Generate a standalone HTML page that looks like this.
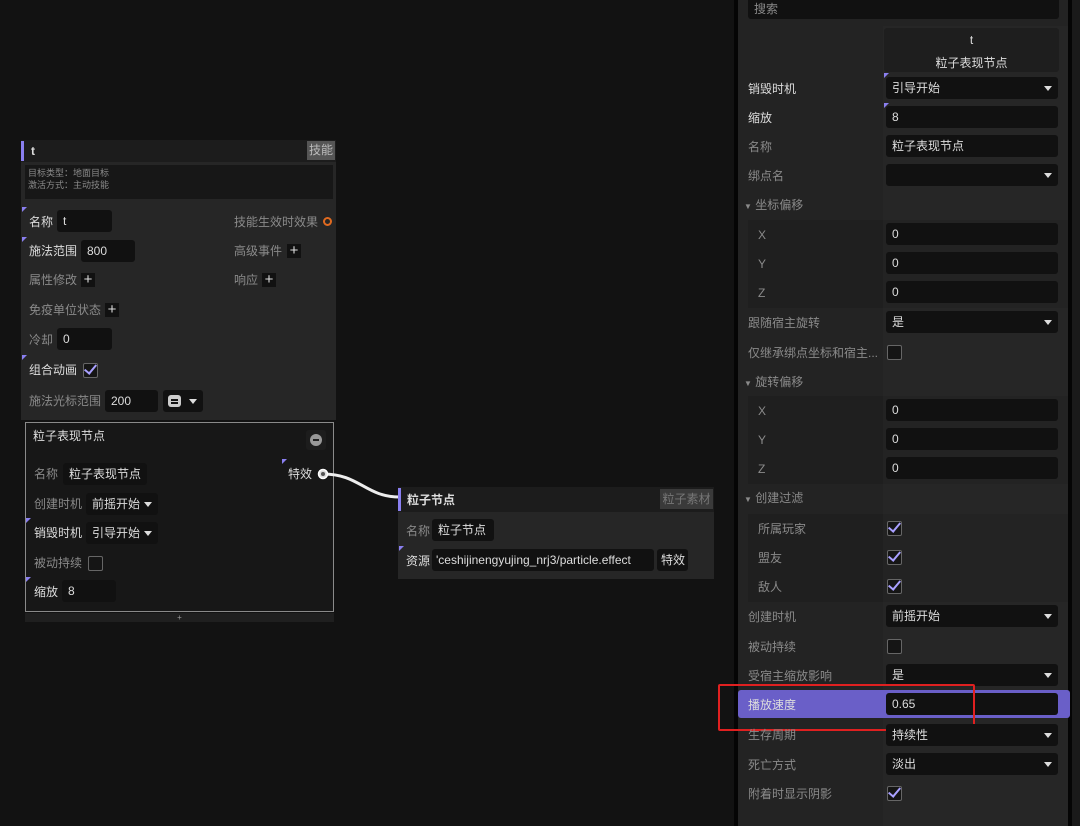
<!DOCTYPE html>
<html><head><meta charset="utf-8"><style>
*{margin:0;padding:0;box-sizing:border-box}
body{width:1080px;height:826px;background:#121212;position:relative;overflow:hidden;font-family:"Liberation Sans","Noto Sans CJK SC",sans-serif;font-size:12px;color:#ddd}
.a{position:absolute}
.t{position:absolute;line-height:16px;white-space:nowrap}
.g{color:#8a8a8a}
.in{position:absolute;background:#111;border-radius:3px;height:22px;line-height:22px;padding-left:6px;color:#ddd;white-space:nowrap;overflow:hidden}
.dd:after{content:"";position:absolute;right:6px;top:9px;border-left:4px solid transparent;border-right:4px solid transparent;border-top:5px solid #ddd}
.cb{position:absolute;width:15px;height:15px;border:1.5px solid #666;background:#151515;border-radius:2px}
.ck:after{content:"";position:absolute;left:3px;top:-2px;width:5px;height:10px;border-right:2px solid #a9a0ff;border-bottom:2px solid #a9a0ff;transform:rotate(40deg)}
.tri{position:absolute;width:0;height:0;border-top:5px solid #8a7ff0;border-right:5px solid transparent}
.plus{position:absolute;width:14px;height:14px;background:#111;color:#ddd;font-size:15px;line-height:13px;text-align:center}
</style></head><body>

<!-- skill node -->
<div class="a" style="left:21px;top:140px;width:315px;height:22px;background:#1c1c1c"></div>
<div class="a" style="left:21px;top:141px;width:3px;height:20px;background:#8a7ff0"></div>
<div class="t" style="left:31px;top:143px;font-weight:bold">t</div>
<div class="a" style="left:307px;top:141px;width:28px;height:19px;background:#555;color:#bbb;text-align:center;line-height:19px">技能</div>
<div class="a" style="left:21px;top:162px;width:315px;height:258px;background:#262626"></div>
<div class="a" style="left:25px;top:165px;width:308px;height:34px;background:#171717"></div>
<div class="t g" style="left:28px;top:167px;font-size:9px;line-height:12px">目标类型：地面目标<br>激活方式：主动技能</div>
<div class="tri" style="left:22px;top:207px"></div>
<div class="t" style="left:29px;top:214px">名称</div><div class="in" style="left:57px;top:210px;width:55px">t</div>
<div class="t g" style="left:234px;top:214px">技能生效时效果</div>
<div class="a" style="left:323px;top:217px;width:9px;height:9px;border:2px solid #e06a20;border-radius:50%"></div>
<div class="tri" style="left:22px;top:237px"></div>
<div class="t" style="left:29px;top:243px">施法范围</div><div class="in" style="left:81px;top:240px;width:54px">800</div>
<div class="t g" style="left:234px;top:243px">高级事件</div><div class="plus" style="left:287px;top:244px">+</div>
<div class="t g" style="left:29px;top:272px">属性修改</div><div class="plus" style="left:81px;top:273px">+</div>
<div class="t g" style="left:234px;top:272px">响应</div><div class="plus" style="left:262px;top:273px">+</div>
<div class="t g" style="left:29px;top:302px">免疫单位状态</div><div class="plus" style="left:105px;top:303px">+</div>
<div class="t g" style="left:29px;top:332px">冷却</div><div class="in" style="left:57px;top:328px;width:55px">0</div>
<div class="tri" style="left:22px;top:355px"></div>
<div class="t" style="left:29px;top:362px">组合动画</div><div class="cb ck" style="left:83px;top:363px"></div>
<div class="t g" style="left:29px;top:393px">施法光标范围</div><div class="in" style="left:105px;top:390px;width:53px">200</div>
<div class="a" style="left:163px;top:390px;width:40px;height:22px;background:#111;border-radius:3px"></div>
<div class="a" style="left:168px;top:395px;width:13px;height:12px;background:#ccc;border-radius:3px"></div>
<div class="a" style="left:171px;top:399px;width:7px;height:1.5px;background:#111"></div><div class="a" style="left:171px;top:402px;width:7px;height:1.5px;background:#111"></div>
<div class="a" style="left:189px;top:399px;border-left:4px solid transparent;border-right:4px solid transparent;border-top:5px solid #ddd"></div>

<!-- particle presentation node -->
<div class="a" style="left:25px;top:422px;width:309px;height:190px;background:#171717;border:1px solid #8a8a8a"></div>
<div class="t" style="left:33px;top:428px">粒子表现节点</div>
<div class="a" style="left:306px;top:430px;width:20px;height:20px;background:#1d1d1d;border-radius:3px"></div>
<div class="a" style="left:310px;top:434px;width:12px;height:12px;background:#999;border-radius:50%"></div>
<div class="a" style="left:313px;top:439px;width:6px;height:2px;background:#222"></div>
<div class="t g" style="left:34px;top:466px">名称</div><div class="in" style="left:63px;top:463px;width:84px">粒子表现节点</div>
<div class="tri" style="left:282px;top:459px"></div>
<div class="t" style="left:288px;top:466px">特效</div>
<div class="t g" style="left:34px;top:496px">创建时机</div><div class="in dd" style="left:86px;top:493px;width:72px;padding-right:18px">前摇开始</div>
<div class="tri" style="left:26px;top:518px"></div>
<div class="t" style="left:34px;top:525px">销毁时机</div><div class="in dd" style="left:86px;top:522px;width:72px">引导开始</div>
<div class="t g" style="left:34px;top:555px">被动持续</div><div class="cb" style="left:88px;top:556px"></div>
<div class="tri" style="left:26px;top:577px"></div>
<div class="t" style="left:34px;top:584px">缩放</div><div class="in" style="left:62px;top:580px;width:54px">8</div>
<div class="a" style="left:25px;top:613px;width:309px;height:9px;background:#1f1f1f;color:#999;font-size:8px;line-height:9px;text-align:center">+</div>

<!-- wire -->
<svg class="a" style="left:0;top:0" width="1080" height="826"><path d="M323 474 C360 474 365 497 400 497" stroke="#eee" stroke-width="3" fill="none"/><circle cx="323" cy="474" r="4.5" fill="#ddd" stroke="#fff" stroke-width="1.5"/><circle cx="323" cy="474" r="2" fill="#555"/></svg>

<!-- particle node -->
<div class="a" style="left:398px;top:487px;width:316px;height:25px;background:#1c1c1c"></div>
<div class="a" style="left:398px;top:488px;width:3px;height:23px;background:#8a7ff0"></div>
<div class="t" style="left:407px;top:492px;font-weight:bold">粒子节点</div>
<div class="a" style="left:660px;top:489px;width:53px;height:20px;background:#3a3a3a;color:#777;text-align:center;line-height:20px">粒子素材</div>
<div class="a" style="left:398px;top:512px;width:316px;height:67px;background:#262626"></div>
<div class="t g" style="left:406px;top:523px">名称</div><div class="in" style="left:432px;top:519px;width:62px">粒子节点</div>
<div class="tri" style="left:399px;top:546px"></div>
<div class="t" style="left:406px;top:553px">资源</div><div class="in" style="left:432px;top:549px;width:222px;padding-left:4px">'ceshijinengyujing_nrj3/particle.effect</div>
<div class="in" style="left:657px;top:549px;width:31px;padding-left:4px">特效</div>

<!-- right panel -->
<div class="a" style="left:734px;top:0;width:338px;height:826px;background:#050505"></div>
<div class="a" style="left:1072px;top:0;width:8px;height:826px;background:#1a1a1a"></div>
<div class="a" style="left:738px;top:0;width:330px;height:826px;background:#232323"></div>
<div class="a" style="left:883px;top:26px;width:185px;height:800px;background:#262626"></div>
<div class="in" style="left:748px;top:-4px;width:311px;height:23px;line-height:26px;color:#8a8a8a">搜索</div>
<div class="a" style="left:884px;top:28px;width:175px;height:44px;background:#1e1e1e;border-radius:3px"></div>
<div class="t" style="left:884px;width:175px;text-align:center;top:32px">t</div>
<div class="t" style="left:884px;width:175px;text-align:center;top:55px">粒子表现节点</div>
<!-- groups bg -->
<div class="a" style="left:748px;top:220px;width:320px;height:88px;background:#1f1f1f"></div>
<div class="a" style="left:748px;top:396px;width:320px;height:88px;background:#1f1f1f"></div>
<div class="a" style="left:748px;top:514px;width:320px;height:88px;background:#1f1f1f"></div>
<div class="a" style="left:883px;top:220px;width:185px;height:88px;background:#232323"></div>
<div class="a" style="left:883px;top:396px;width:185px;height:88px;background:#232323"></div>
<div class="a" style="left:883px;top:514px;width:185px;height:88px;background:#232323"></div>

<div class="tri" style="left:884px;top:73px"></div>
<div class="t" style="left:748px;top:81px">销毁时机</div><div class="in dd" style="left:886px;top:77px;width:172px">引导开始</div>
<div class="tri" style="left:884px;top:103px"></div>
<div class="t" style="left:748px;top:110px">缩放</div><div class="in" style="left:886px;top:106px;width:172px">8</div>
<div class="t g" style="left:748px;top:139px">名称</div><div class="in" style="left:886px;top:135px;width:172px">粒子表现节点</div>
<div class="t g" style="left:748px;top:168px">绑点名</div><div class="in dd" style="left:886px;top:164px;width:172px"></div>
<div class="t g" style="left:744px;top:197px"><span style="font-size:8px">▼</span> 坐标偏移</div>
<div class="t g" style="left:758px;top:227px">X</div><div class="in" style="left:886px;top:223px;width:172px">0</div>
<div class="t g" style="left:758px;top:256px">Y</div><div class="in" style="left:886px;top:252px;width:172px">0</div>
<div class="t g" style="left:758px;top:285px">Z</div><div class="in" style="left:886px;top:281px;width:172px">0</div>
<div class="t g" style="left:748px;top:315px">跟随宿主旋转</div><div class="in dd" style="left:886px;top:311px;width:172px">是</div>
<div class="t g" style="left:748px;top:345px">仅继承绑点坐标和宿主...</div><div class="cb" style="left:887px;top:345px"></div>
<div class="t g" style="left:744px;top:374px"><span style="font-size:8px">▼</span> 旋转偏移</div>
<div class="t g" style="left:758px;top:403px">X</div><div class="in" style="left:886px;top:399px;width:172px">0</div>
<div class="t g" style="left:758px;top:432px">Y</div><div class="in" style="left:886px;top:428px;width:172px">0</div>
<div class="t g" style="left:758px;top:461px">Z</div><div class="in" style="left:886px;top:457px;width:172px">0</div>
<div class="t g" style="left:744px;top:490px"><span style="font-size:8px">▼</span> 创建过滤</div>
<div class="t g" style="left:758px;top:521px">所属玩家</div><div class="cb ck" style="left:887px;top:521px"></div>
<div class="t g" style="left:758px;top:550px">盟友</div><div class="cb ck" style="left:887px;top:550px"></div>
<div class="t g" style="left:758px;top:579px">敌人</div><div class="cb ck" style="left:887px;top:579px"></div>
<div class="t g" style="left:748px;top:609px">创建时机</div><div class="in dd" style="left:886px;top:605px;width:172px">前摇开始</div>
<div class="t g" style="left:748px;top:639px">被动持续</div><div class="cb" style="left:887px;top:639px"></div>
<div class="t g" style="left:748px;top:668px">受宿主缩放影响</div><div class="in dd" style="left:886px;top:664px;width:172px">是</div>
<div class="a" style="left:738px;top:690px;width:332px;height:28px;background:#6a5fc8;border-radius:3px"></div>
<div class="t" style="left:748px;top:697px">播放速度</div><div class="in" style="left:886px;top:693px;width:172px">0.65</div>
<div class="a" style="left:718px;top:684px;width:257px;height:47px;border:2px solid #e02020;border-radius:2px"></div>
<div class="t g" style="left:748px;top:727px">生存周期</div><div class="in dd" style="left:886px;top:724px;width:172px">持续性</div>
<div class="t g" style="left:748px;top:757px">死亡方式</div><div class="in dd" style="left:886px;top:753px;width:172px">淡出</div>
<div class="t g" style="left:748px;top:786px">附着时显示阴影</div><div class="cb ck" style="left:887px;top:786px"></div>
</body></html>
